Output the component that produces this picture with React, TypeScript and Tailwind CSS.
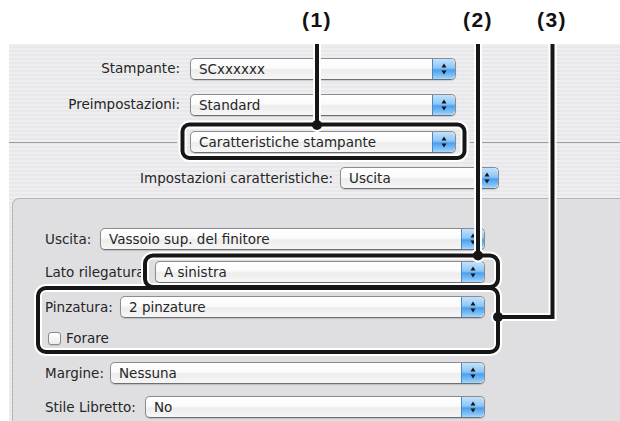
import React from 'react';

type SelectProps = {
  value: string;
  width: string;
};

function Stepper() {
  return (
    <div className="h-full w-[23px] shrink-0 rounded-r-[5px] border-l border-[#4f86c8] bg-[linear-gradient(180deg,#c2e2fc_0%,#8cc6f6_45%,#4aa0ef_55%,#7ec2f8_85%,#a9d8fd_100%)] flex items-center justify-center">
      <svg width="10" height="14" viewBox="0 0 10 14">
        <polygon points="2.5,5.5 7.5,5.5 5,1.5" fill="#151515" />
        <polygon points="2.5,8.5 7.5,8.5 5,12.5" fill="#151515" />
      </svg>
    </div>
  );
}

function Select({ value, width }: SelectProps) {
  return (
    <div
      className={`${width} h-[22px] shrink-0 flex items-stretch rounded-[5px] border border-[#8c8c8e] border-b-[#6f6f72] bg-[linear-gradient(180deg,#ffffff_0%,#fbfbfb_45%,#ededed_55%,#f6f6f6_100%)] shadow-[0_1px_1px_rgba(0,0,0,0.15)]`}
    >
      <span className="flex-1 pl-[8px] leading-[20px] text-[#262626] truncate">{value}</span>
      <Stepper />
    </div>
  );
}

function Callouts() {
  const outline = 'white';
  return (
    <svg
      className="absolute inset-0 pointer-events-none"
      width="620"
      height="421"
      viewBox="0 0 620 421"
    >
      <g fill="none" stroke={outline} strokeWidth="8">
        <path d="M317 44 V125" />
        <rect x="182.5" y="124.5" width="282" height="33.5" rx="7" />
        <path d="M478 44 V255" />
        <rect x="145" y="255.5" width="353" height="31.5" rx="8" />
        <path d="M552.5 44 V317 H498" />
        <rect x="38" y="288" width="460" height="64" rx="8" />
      </g>
      <g fill={outline}>
        <circle cx="317" cy="125" r="7" />
        <circle cx="478" cy="255.5" r="7" />
        <circle cx="498" cy="317" r="7" />
      </g>
      <g fill="none" stroke="#161616" strokeWidth="4">
        <path d="M317 44 V125" />
        <rect x="182.5" y="124.5" width="282" height="33.5" rx="7" />
        <path d="M478 44 V255" />
        <rect x="145" y="255.5" width="353" height="31.5" rx="8" />
        <path d="M552.5 44 V317 H498" />
        <rect x="38" y="288" width="460" height="64" rx="8" />
      </g>
      <g fill="#161616">
        <circle cx="317" cy="125" r="5" />
        <circle cx="478" cy="255.5" r="5" />
        <circle cx="498" cy="317" r="5" />
      </g>
    </svg>
  );
}

export default function App() {
  return (
    <div className="relative w-[620px] h-[421px] overflow-hidden bg-white font-['DejaVu_Sans',sans-serif] text-[13.5px] text-[#262626]">
      {/* callout numbers */}
      <div className="h-[44px] flex items-center pl-[297px] pb-[4px] font-['Liberation_Sans',Arial,sans-serif] font-bold text-[21px] tracking-[1.5px] text-[#111]">
        <span className="w-[40px] text-center">(1)</span>
        <span className="w-[40px] ml-[121px] text-center">(2)</span>
        <span className="w-[40px] ml-[34px] text-center">(3)</span>
      </div>

      <div className="ml-[9px] h-[377px] flex flex-col bg-[repeating-linear-gradient(180deg,#eeeef0_0px,#eeeef0_2px,#e8e8ea_2px,#e8e8ea_4px)]">
        <div className="mt-[13px] h-[23px] flex items-center">
          <span className="w-[171px] text-right">Stampante:</span>
          <div className="ml-[10px]">
            <Select value="SCxxxxxx" width="w-[266px]" />
          </div>
        </div>

        <div className="mt-[13px] h-[23px] flex items-center">
          <span className="w-[171px] text-right">Preimpostazioni:</span>
          <div className="ml-[10px]">
            <Select value="Standard" width="w-[266px]" />
          </div>
        </div>

        <div className="mt-[15px] h-[22px] flex items-center">
          <div className="w-[168px] h-px bg-[#9c9ca0]" />
          <div className="ml-[13px]">
            <Select value="Caratteristiche stampante" width="w-[266px]" />
          </div>
          <div className="ml-[14px] flex-1 h-px bg-[#9c9ca0]" />
        </div>

        <div className="mt-[14px] h-[22px] flex items-center">
          <span className="w-[324px] text-right">Impostazioni caratteristiche:</span>
          <div className="ml-[7px]">
            <Select value="Uscita" width="w-[159px]" />
          </div>
        </div>

        <div className="mt-[9px] ml-[3px] flex-1 flex flex-col pl-[32px] rounded-tl-[7px] border-t border-l border-[#b5b5b8] bg-[#dfdfe2]">
          <div className="mt-[29px] h-[22px] flex items-center">
            <span className="w-[55px]">Uscita:</span>
            <Select value="Vassoio sup. del finitore" width="w-[385px]" />
          </div>
          <div className="mt-[11px] h-[22px] flex items-center">
            <span className="w-[110px] whitespace-nowrap">Lato rilegatura:</span>
            <Select value="A sinistra" width="w-[330px]" />
          </div>
          <div className="mt-[13px] h-[22px] flex items-center">
            <span className="w-[75px]">Pinzatura:</span>
            <Select value="2 pinzature" width="w-[365px]" />
          </div>
          <div className="mt-[13px] h-[14px] flex items-center pl-[3px]">
            <span className="w-[13px] h-[13px] rounded-[3px] border border-[#8a8a8d] bg-[linear-gradient(180deg,#ffffff,#ececec)] shadow-[0_1px_1px_rgba(0,0,0,0.12)]" />
            <span className="ml-[5px]">Forare</span>
          </div>
          <div className="mt-[17px] h-[22px] flex items-center">
            <span className="w-[65px]">Margine:</span>
            <Select value="Nessuna" width="w-[375px]" />
          </div>
          <div className="mt-[12px] h-[22px] flex items-center">
            <span className="w-[100px] whitespace-nowrap">Stile Libretto:</span>
            <Select value="No" width="w-[340px]" />
          </div>
        </div>
      </div>

      <Callouts />
    </div>
  );
}
